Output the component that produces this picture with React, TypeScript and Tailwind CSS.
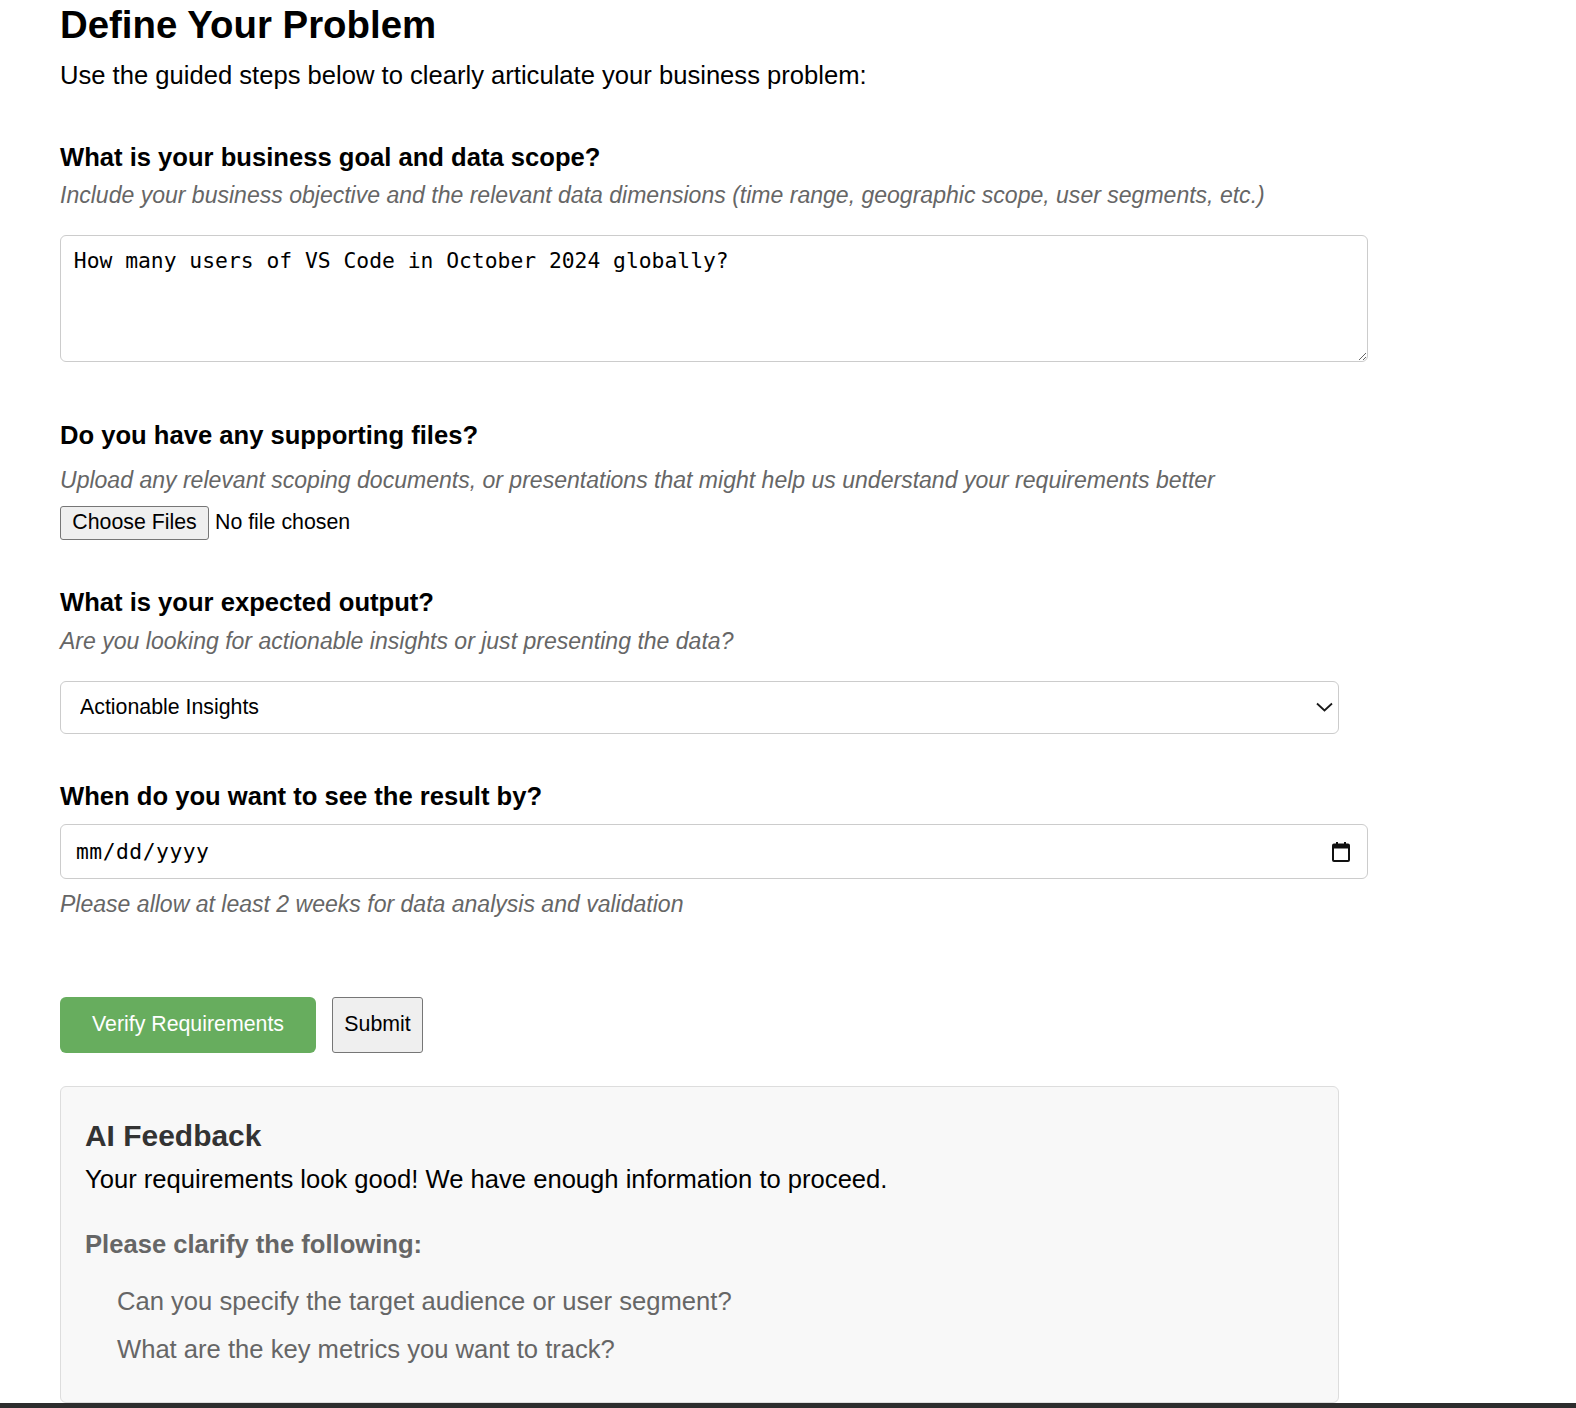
import React from "react";

const sans = "font-['Liberation_Sans',Arial,Helvetica,sans-serif]";

function Question({ children, className = "" }: { children: React.ReactNode; className?: string }) {
  return <h3 className={`m-0 text-[25.6px] leading-[30px] font-bold text-black ${className}`}>{children}</h3>;
}

function Hint({ children, className = "" }: { children: React.ReactNode; className?: string }) {
  return <p className={`m-0 text-[23.04px] leading-[28px] italic text-[#666666] ${className}`}>{children}</p>;
}

export default function App() {
  return (
    <div className={`${sans} bg-white w-[1576px] flex flex-col`}>
      <div className="pl-[60px] pt-[3px] flex flex-col items-start">
        <h1 className="m-0 text-[38.4px] leading-[44px] font-bold text-black">Define Your Problem</h1>
        <p className="m-0 mt-[13px] text-[25.6px] leading-[30px] text-black">
          Use the guided steps below to clearly articulate your business problem:
        </p>

        <Question className="mt-[52px]">What is your business goal and data scope?</Question>
        <Hint className="mt-[9px]">
          Include your business objective and the relevant data dimensions (time range, geographic scope, user segments, etc.)
        </Hint>
        <textarea
          className="mt-[26px] w-[1308px] h-[127px] border border-[#cccccc] rounded-[6px] pt-[9px] pb-[12.8px] px-[12.8px] font-['DejaVu_Sans_Mono',Menlo,monospace] text-[21.33px] text-black bg-white outline-none"
          defaultValue="How many users of VS Code in October 2024 globally?"
        />

        <Question className="mt-[58px]">Do you have any supporting files?</Question>
        <Hint className="mt-[16px]">
          Upload any relevant scoping documents, or presentations that might help us understand your requirements better
        </Hint>
        <div className="mt-[12px] h-[34px] flex items-center">
          <button className="w-[149px] h-[34px] bg-[#efefef] border border-[#767676] rounded-[3px] text-[21.33px] text-black flex items-center justify-center">
            Choose Files
          </button>
          <span className="ml-[6px] text-[21.33px] text-black">No file chosen</span>
        </div>

        <Question className="mt-[47px]">What is your expected output?</Question>
        <Hint className="mt-[10px]">Are you looking for actionable insights or just presenting the data?</Hint>
        <div className="relative mt-[26px] w-[1279px] h-[53px]">
          <select
            className="appearance-none w-full h-full border border-[#cccccc] rounded-[6px] bg-white pl-[19px] text-[21.33px] text-black outline-none"
            defaultValue="insights"
          >
            <option value="insights">Actionable Insights</option>
            <option value="data">Data Presentation</option>
          </select>
          <svg
            className="absolute right-[6px] top-[21px] pointer-events-none"
            width="17"
            height="10"
            viewBox="0 0 17 10"
            fill="none"
          >
            <polyline points="1,1.5 8.5,8.5 16,1.5" stroke="#1a1a1a" strokeWidth="1.8" fill="none" />
          </svg>
        </div>

        <Question className="mt-[47px]">When do you want to see the result by?</Question>
        <div className="mt-[13px] w-[1308px] h-[55px] border border-[#cccccc] rounded-[6px] bg-white flex items-center justify-between pl-[15px] pr-[17px]">
          <span className="font-['DejaVu_Sans_Mono',Menlo,monospace] text-[21.33px] text-black tracking-[0.5px]">mm/dd/yyyy</span>
          <svg width="18" height="20" viewBox="0 0 18 20" fill="none">
            <rect x="4" y="0" width="2" height="3" fill="#111" />
            <rect x="12" y="0" width="2" height="3" fill="#111" />
            <rect x="1" y="2.5" width="16" height="16.5" rx="1" stroke="#111" strokeWidth="2" fill="none" />
            <rect x="1" y="2.5" width="16" height="4" fill="#111" />
          </svg>
        </div>
        <Hint className="mt-[11px]">Please allow at least 2 weeks for data analysis and validation</Hint>

        <div className="mt-[79px] flex items-center gap-[16px]">
          <button className="w-[256px] h-[56px] bg-[#67ad5e] rounded-[6px] text-white text-[21.33px] flex items-center justify-center">
            Verify Requirements
          </button>
          <button className="w-[91px] h-[56px] bg-[#efefef] border border-[#767676] rounded-[3px] text-black text-[21.33px] flex items-center justify-center">
            Submit
          </button>
        </div>

        <div className="mt-[33px] w-[1279px] h-[317px] bg-[#f8f8f8] border border-[#dddddd] rounded-[6px] pt-[32px] pl-[24px] flex flex-col items-start">
          <h3 className="m-0 text-[29.95px] leading-[34px] font-bold text-[#333333]">AI Feedback</h3>
          <p className="m-0 mt-[11px] text-[25.6px] leading-[30px] text-black">
            Your requirements look good! We have enough information to proceed.
          </p>
          <h4 className="m-0 mt-[35px] text-[25.6px] leading-[30px] font-bold text-[#666666]">Please clarify the following:</h4>
          <ul className="m-0 mt-[27px] pl-[32px] list-none flex flex-col gap-[18px]">
            <li className="text-[25.6px] leading-[30px] text-[#666666]">Can you specify the target audience or user segment?</li>
            <li className="text-[25.6px] leading-[30px] text-[#666666]">What are the key metrics you want to track?</li>
          </ul>
        </div>
      </div>
      <div className="h-[5px] bg-[#2d2d2d]" />
    </div>
  );
}
